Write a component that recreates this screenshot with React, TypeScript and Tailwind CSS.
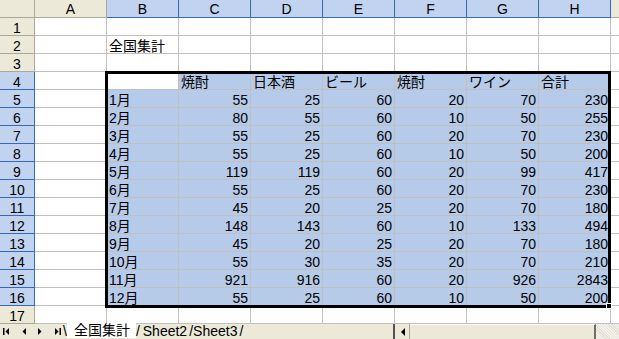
import React from 'react';

const cols = ['A', 'B', 'C', 'D', 'E', 'F', 'G', 'H'];

const data: (string | number)[][] = [
  ['1月', 55, 25, 60, 20, 70, 230],
  ['2月', 80, 55, 60, 10, 50, 255],
  ['3月', 55, 25, 60, 20, 70, 230],
  ['4月', 55, 25, 60, 10, 50, 200],
  ['5月', 119, 119, 60, 20, 99, 417],
  ['6月', 55, 25, 60, 20, 70, 230],
  ['7月', 45, 20, 25, 20, 70, 180],
  ['8月', 148, 143, 60, 10, 133, 494],
  ['9月', 45, 20, 25, 20, 70, 180],
  ['10月', 55, 30, 35, 20, 70, 210],
  ['11月', 921, 916, 60, 20, 926, 2843],
  ['12月', 55, 25, 60, 10, 50, 200],
];

const heads = ['', '焼酎', '日本酒', 'ビール', '焼酎', 'ワイン', '合計'];

// value shown in a cell: row 1..17, col index 0 (A) .. 7 (H)
function cellValue(row: number, col: number): string | number {
  if (row === 2 && col === 1) return '全国集計';
  if (row === 4 && col >= 1) return heads[col - 1];
  if (row >= 5 && row <= 16 && col >= 1) return data[row - 5][col - 1];
  return '';
}

function inSel(row: number, col: number) {
  return row >= 4 && row <= 16 && col >= 1 && col <= 7;
}

function TabArrow({ dir, bar }: { dir: 'l' | 'r'; bar?: boolean }) {
  return (
    <svg width="9" height="9" viewBox="0 0 9 9">
      {dir === 'l' ? (
        <>
          {bar && <rect x="1" y="1" width="1.5" height="7" fill="#000" />}
          <polygon points="7,1 7,8 3.5,4.5" fill="#000" />
        </>
      ) : (
        <>
          <polygon points="2,1 2,8 5.5,4.5" fill="#000" />
          {bar && <rect x="6.5" y="1" width="1.5" height="7" fill="#000" />}
        </>
      )}
    </svg>
  );
}

export default function App() {
  const rows = Array.from({ length: 17 }, (_, i) => i + 1);

  return (
    <div
      className="relative w-[619px] h-[339px] overflow-hidden bg-white text-[14px] text-black"
      style={{ fontFamily: '"Liberation Sans", "Noto Sans CJK JP", sans-serif' }}
    >
      {/* column headers */}
      <div className="flex h-[18px]">
        <div className="w-[35px] shrink-0 bg-[#ece9d8] border-r border-b border-[#aca899]" />
        {cols.map((c, i) => (
          <div
            key={c}
            className={
              i === 0
                ? 'w-[72px] shrink-0 bg-[#ece9d8] border-r border-b border-[#aca899] text-center leading-[14px] pt-[2px]'
                : 'w-[72px] shrink-0 bg-[#c1d3ef] border-r border-b border-r-[#316ac5] border-b-[#316ac5] text-center leading-[14px] pt-[2px]'
            }
          >
            {c}
          </div>
        ))}
        <div className="flex-1 bg-[#ece9d8] border-b border-[#aca899]" />
      </div>

      {/* grid rows */}
      {rows.map((r) => {
        const hl = r >= 4 && r <= 16;
        return (
          <div key={r} className="flex h-[18px]">
            <div
              className={
                hl
                  ? 'w-[35px] shrink-0 bg-[#c1d3ef] border-r border-b border-r-[#316ac5] border-b-[#316ac5] text-center leading-[14px] pt-[3px]'
                  : 'w-[35px] shrink-0 bg-[#ece9d8] border-r border-b border-[#aca899] text-center leading-[14px] pt-[3px]'
              }
            >
              {r}
            </div>
            {cols.map((c, ci) => {
              const v = cellValue(r, ci);
              const sel = inSel(r, ci) && !(r === 4 && ci === 1);
              const num = typeof v === 'number';
              return (
                <div
                  key={c}
                  className={
                    (sel ? 'bg-[#b6cae9] ' : 'bg-white ') +
                    'w-[72px] shrink-0 border-r border-b border-[#c0c0c0] leading-[14px] pt-[3px] whitespace-nowrap overflow-visible ' +
                    (num ? 'text-right pr-[2px]' : 'text-left pl-[2px]')
                  }
                >
                  {v}
                </div>
              );
            })}
            <div className="flex-1 border-b border-[#c0c0c0] bg-white" />
          </div>
        );
      })}

      {/* selection outline */}
      <div className="absolute left-[105px] top-[71px] w-[506px] h-[237px] border-[3px] border-black pointer-events-none" />
      <div className="absolute left-[606px] top-[303px] w-[6px] h-[6px] bg-black border border-white pointer-events-none" />

      {/* sheet tabs + horizontal scrollbar */}
      <div className="flex h-[15px] bg-[#ece9d8] items-stretch">
        <div className="flex items-center w-[63px] shrink-0 pl-[2px] gap-[8px]">
          <TabArrow dir="l" bar />
          <TabArrow dir="l" />
          <TabArrow dir="r" />
          <TabArrow dir="r" bar />
        </div>
        <div className="flex items-start w-[330px] shrink-0 text-[14px] leading-[14px]">
          <span>\</span>
          <span className="bg-white pl-[7px] pr-[6px] -mt-[1px] leading-[15px]">全国集計</span>
          <span>/</span>
          <span className="pl-[3px]">Sheet2</span>
          <span className="pl-[2px]">/</span>
          <span>Sheet3</span>
          <span className="pl-[2px]">/</span>
        </div>
        <div className="w-[3px] shrink-0 border-l-2 border-[#555]" />
        <div className="w-[14px] shrink-0 flex items-center justify-center border-r border-[#aca899]">
          <svg width="6" height="8" viewBox="0 0 6 8">
            <polygon points="5,0 5,8 1,4" fill="#000" />
          </svg>
        </div>
        <div className="w-[186px] shrink-0 bg-[#ece9d8] border-t border-white border-r-2 border-r-[#716f64]" />
        <div className="flex-1 bg-[repeating-linear-gradient(45deg,#f4f3ee_0px,#f4f3ee_1px,#e3e1d6_1px,#e3e1d6_2px)]" />
      </div>
    </div>
  );
}
